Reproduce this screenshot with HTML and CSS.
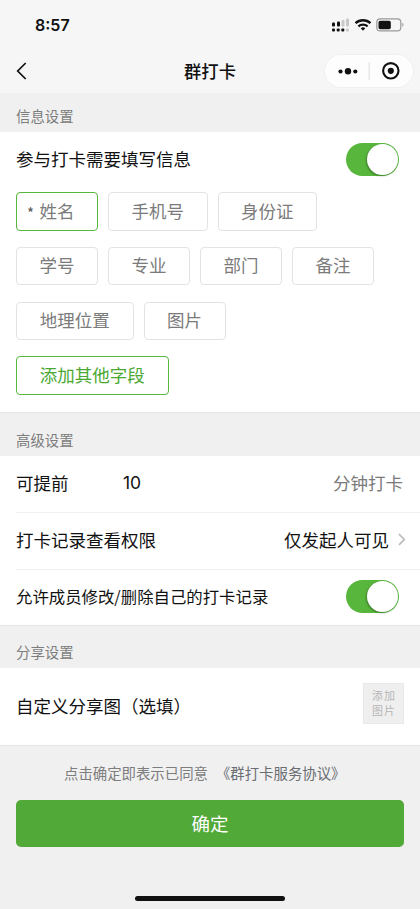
FILE: index.html
```html
<!DOCTYPE html>
<html lang="zh-CN">
<head>
<meta charset="utf-8">
<title>群打卡</title>
<link rel="stylesheet" href="styles.css">
</head>
<body>
<main class="screen">
  <header class="top">
    <div class="status">
      <span class="time">8:57</span>
      <svg class="status-icons" width="74" height="16" viewBox="0 0 74 16">
        <g fill="#111">
          <rect x="1" y="5.500" width="3" height="4" rx="1"/><rect x="6" y="4.500" width="3" height="5" rx="1"/>
          <rect x="1" y="11.500" width="3" height="3" rx="1"/><rect x="5.700" y="11.500" width="3" height="3" rx="1"/><rect x="10.300" y="11.500" width="3" height="3" rx="1"/>
        </g>
        <g fill="#c8c8c8"><rect x="10.500" y="3" width="3" height="6.500" rx="1"/><rect x="15" y="1.500" width="3" height="8" rx="1"/><rect x="15" y="11.500" width="3" height="3" rx="1"/></g>
        <g fill="none" stroke="#111" stroke-width="2.300"><path d="M24.500 6.200a11 11 0 0 1 15 0"/><path d="M27.400 9.400a6.800 6.800 0 0 1 9.200 0"/></g>
        <path d="M32 13.700l-2.300-2.400a3.500 3.500 0 0 1 4.600 0z" fill="#111"/>
        <rect x="45.800" y="1.900" width="24" height="12" rx="3.500" fill="none" stroke="#999" stroke-width="1.200"/>
        <rect x="47.500" y="3.700" width="12.300" height="8.500" rx="1.800" fill="#111"/>
        <path d="M71.300 5.800a2.300 2.300 0 0 1 0 4z" fill="#999"/>
      </svg>
    </div>
    <nav class="nav">
      <svg class="back" width="12" height="18" viewBox="0 0 12 18"><path d="M9.700 1L1.700 9l8 8" fill="none" stroke="#111" stroke-width="1.700"/></svg>
      <h1>群打卡</h1>
      <div class="capsule">
        <svg width="88" height="32" viewBox="0 0 88 32">
          <g fill="#111"><circle cx="15.500" cy="16.500" r="2.100"/><circle cx="23" cy="16.200" r="3.200"/><circle cx="30.300" cy="16.500" r="2.100"/></g>
          <path d="M44.200 7v18" stroke="#dedede"/>
          <circle cx="65.800" cy="15.800" r="7.700" fill="none" stroke="#111" stroke-width="2.100"/><circle cx="65.800" cy="15.800" r="3.100" fill="#111"/>
        </svg>
      </div>
    </nav>
  </header>

  <h2 class="heading heading-info">信息设置</h2>
  <section class="panel fields">
    <div class="field-title"><span>参与打卡需要填写信息</span><span class="switch"></span></div>
    <div class="chips">
      <div class="chip-row"><span class="chip w2 selected"><i>*</i>姓名</span><span class="chip w3">手机号</span><span class="chip w3">身份证</span></div>
      <div class="chip-row"><span class="chip w2">学号</span><span class="chip w2">专业</span><span class="chip w2">部门</span><span class="chip w2">备注</span></div>
      <div class="chip-row"><span class="chip w4">地理位置</span><span class="chip w2">图片</span></div>
      <div class="chip-row"><span class="chip w6 add">添加其他字段</span></div>
    </div>
  </section>

  <h2 class="heading heading-advanced">高级设置</h2>
  <section class="panel advanced">
    <div class="row"><span class="advance">可提前</span><span class="minutes">10</span><span class="unit">分钟打卡</span></div>
    <div class="row"><span>打卡记录查看权限</span><span class="choice">仅发起人可见</span>
      <svg class="chevron" width="8" height="13" viewBox="0 0 8 13"><path d="M1 1.200l5.300 5.300L1 11.800" fill="none" stroke="#bbb" stroke-width="1.700"/></svg></div>
    <div class="row"><span class="compact">允许成员修改/删除自己的打卡记录</span><span class="switch"></span></div>
  </section>

  <h2 class="heading heading-share">分享设置</h2>
  <section class="panel share"><span>自定义分享图（选填）</span><span class="upload">添加<br>图片</span></section>

  <p class="terms"><span>点击确定即表示已同意</span><a>《群打卡服务协议》</a></p>
  <button class="confirm">确定</button>
  <div class="home"></div>
</main>
</body>
</html>
```

FILE: styles.css
```css
* { box-sizing: border-box; }
body { margin: 0; background: #f0f0f0; color: #111; font: 17.5px/24px "Noto Sans CJK SC", sans-serif; }
h1, h2, p { margin: 0; font-weight: 400; }
svg { display: block; }
.screen { height: 909px; display: flex; flex-direction: column; overflow: hidden; white-space: nowrap; }
.top { height: 93px; background: #f6f6f6; flex: none; }
.status { height: 51px; padding: 17px 15px 0 35px; display: flex; justify-content: space-between; }
.time { font: 600 16px/17px Inter, sans-serif; }
.nav { height: 42px; padding: 4px 7px 0 16px; display: grid; grid-template-columns: 88px 1fr 88px; align-items: start; }
.back { margin-top: 7px; }
h1 { font-size: 17.3px; font-weight: 500; line-height: 32px; text-align: center; margin-left: -9px; }
.capsule { width: 88px; height: 32px; border-radius: 16px; background: #fdfdfd; box-shadow: 0 0 0 1px #f0f0f0; }
.heading { flex: none; padding-left: 16px; color: #7d7d7d; font-size: 14.4px; }
.heading-info { height: 39px; padding-top: 11px; }
.heading-advanced { height: 43px; padding-top: 15px; }
.heading-share { height: 42px; padding-top: 14px; }
.panel { flex: none; background: #fff; border-bottom: 1px solid #e5e5e5; }
.fields { height: 281px; padding: 0 16px; }
.field-title { height: 60px; padding: 11px 5px 0 0; display: flex; justify-content: space-between; align-items: flex-start; }
.field-title > :first-child { margin-top: 4px; }
.switch { flex: none; width: 53px; height: 33px; padding: 1px; border-radius: 17px; background: #58b63d; display: flex; justify-content: flex-end; }
.switch::after { content: ""; width: 31px; height: 31px; border-radius: 50%; background: #fff; box-shadow: -1px 1px 2px rgba(0, 0, 0, .3); }
.chips { display: flex; flex-direction: column; gap: 16.3px; }
.chip-row { display: flex; gap: 10px; }
.chip { height: 38.5px; border: 1px solid #e3e3e3; border-radius: 4px; color: #7b7b7b; display: flex; align-items: center; justify-content: center; padding-bottom: 1.5px; }
.w2 { width: 82px; }
.w3 { width: 99.5px; }
.w4 { width: 117.5px; }
.w6 { width: 152.5px; }
.selected { border-color: #57b63c; justify-content: flex-start; padding-left: 10px; }
.selected i { width: 12.5px; padding-top: 5px; font-style: normal; font-size: 15px; color: #555; }
.add { border-color: #57b63c; color: #4aa832; }
.advanced { height: 170px; padding-left: 16px; }
.row { height: 56.5px; padding: 0 16px 2px 0; display: flex; align-items: center; }
.row:first-child { height: 56px; }
.row + .row { border-top: 1px solid #f0f0f0; }
.advance { width: 107px; }
.minutes { font: 17.5px/24px Inter, sans-serif; }
.unit { margin-left: auto; margin-right: 1px; color: #7b7b7b; }
.choice { margin-left: auto; }
.chevron { margin: 0 -2px 0 9px; }
.compact { font-size: 16.4px; }
.row .switch { margin: 0 5px 0 auto; }
.share { height: 78px; padding: 0 16px; display: flex; align-items: center; justify-content: space-between; }
.share > :first-child { margin-bottom: 2px; }
.upload { width: 41px; height: 41px; margin-bottom: 6px; padding: 4px 0 0 1px; background: #efefef; border: 1px solid #e9e9e9; color: #b5b5b5; font-size: 11px; line-height: 15px; letter-spacing: 1px; text-align: center; }
.terms { flex: none; height: 54px; padding: 15px 0 0 64px; display: flex; color: #7d7d7d; font-size: 14.4px; }
.terms a { margin-left: 8px; color: #6a6d72; }
.confirm { flex: none; height: 47px; margin: 0 16px; padding: 0; border: 0; border-radius: 5px; background: #51a938; color: #fff; font: 18.5px/47px "Noto Sans CJK SC", sans-serif; }
.home { width: 150px; height: 5px; margin: auto auto 8px; border-radius: 3px; background: #111; }
```
